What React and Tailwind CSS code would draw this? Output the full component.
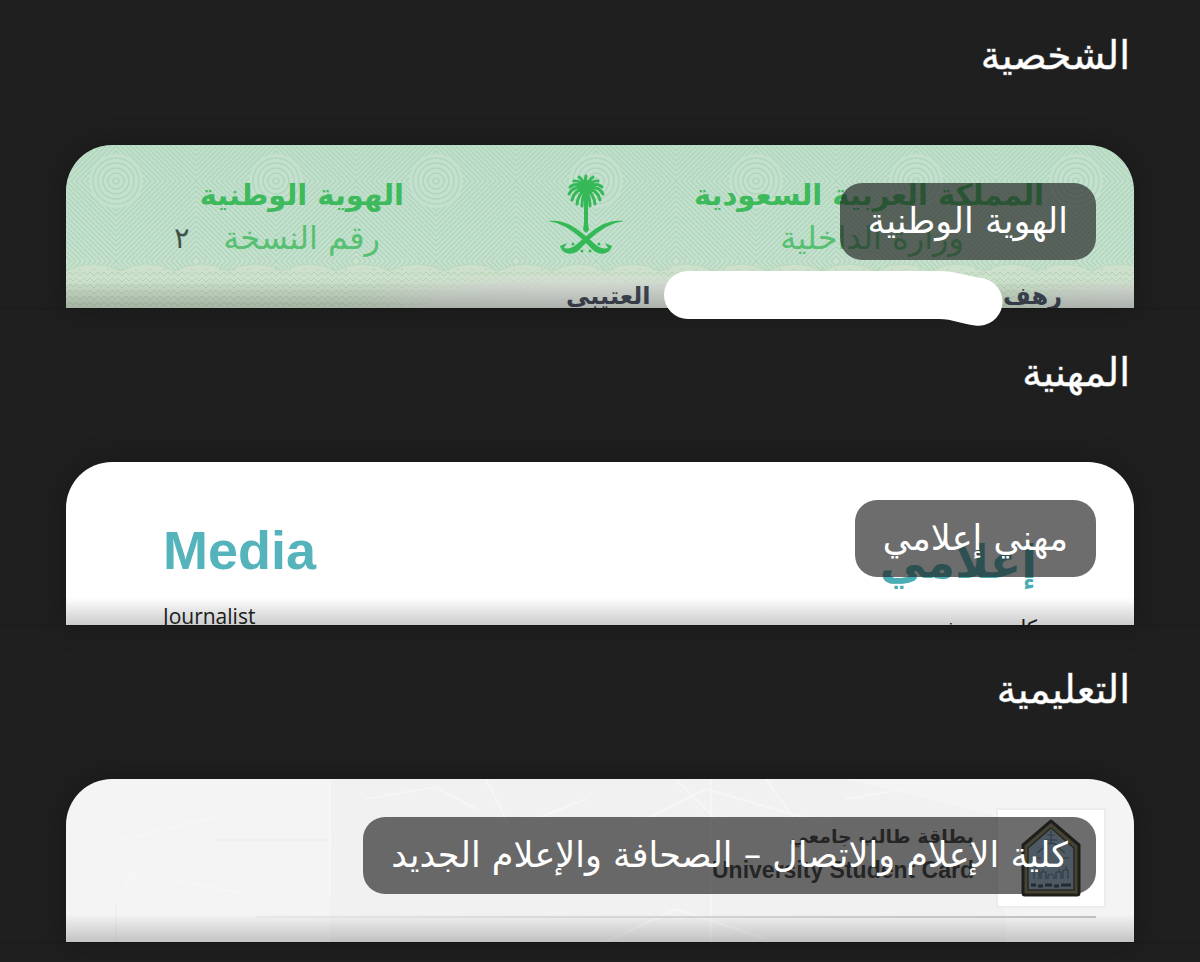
import clsx from "clsx";

function Palm({ className }) {
    return (
        <svg viewBox="0 0 76 84" className={className} fill="#35b957">
            <g fill="none" stroke="#35b957" strokeWidth="3" strokeLinecap="round">
                <path d="M38 14Q37 6 38 3M38 14Q34 6 31 4M38 14Q42 6 45 4" />
                <path d="M38 14Q31 7 26 8M38 14Q45 7 50 8" />
                <path d="M38 14Q27 9 22 14M38 14Q49 9 54 14" />
                <path d="M38 14Q24 13 21 21M38 14Q52 13 55 21" />
                <path d="M38 15Q26 17 24 27M38 15Q50 17 52 27" />
                <path d="M38 16Q30 21 29 31M38 16Q46 21 47 31" />
                <path d="M38 17Q34 24 34 33M38 17Q42 24 42 33" />
            </g>
            <ellipse cx="38" cy="14" rx="9" ry="7" />
            <path d="M36 18H40L40 50L41 57L38 60L35 57L36 50Z" />
            <path d="M0 48C18 46 28 55 39 64C47 71 52 77 60 75L57 70L64 73C62 81 53 83 46 78C37 70 24 52 0 48Z" />
            <path d="M76 48C58 46 48 55 37 64C29 71 24 77 16 75L19 70L12 73C14 81 23 83 30 78C39 70 52 52 76 48Z" />
            <circle cx="25" cy="71" r="1.5" />
            <circle cx="34" cy="78" r="1.5" />
            <circle cx="42" cy="78" r="1.5" />
            <circle cx="51" cy="71" r="1.5" />
        </svg>
    );
}

function Guilloche() {
    const rings = [5, 10, 15, 20, 25, 30, 35, 40, 45, 50, 55, 60, 65, 70, 75, 80];
    return (
        <svg className="absolute inset-0 size-full" aria-hidden="true">
            <defs>
                <linearGradient id="paper" x1="0" y1="0" x2="0" y2="1">
                    <stop offset="0" stopColor="#c2dfcc" />
                    <stop offset="0.6" stopColor="#c7e1d0" />
                    <stop offset="1" stopColor="#cfe0cd" />
                </linearGradient>
                <pattern
                    id="rings"
                    width="160"
                    height="160"
                    x="130"
                    y="-44"
                    patternUnits="userSpaceOnUse"
                >
                    <g fill="none" stroke="#9ccfae" strokeWidth="1.5">
                        {rings.map((r) => (
                            <path
                                key={r}
                                d={`M${80 - r} 80L80 ${80 - r}L${80 + r} 80L80 ${80 + r}Z`}
                                strokeLinejoin="round"
                            />
                        ))}
                        {rings.map((r) => (
                            <path
                                key={r}
                                d={`M0 ${80 - r}L${80 - r} 0M160 ${80 - r}L${80 + r} 0M0 ${80 + r}L${80 - r} 160M160 ${80 + r}L${80 + r} 160`}
                            />
                        ))}
                    </g>
                    <circle cx="80" cy="80" r="27" fill="#c6e0cf" />
                    <g fill="none" stroke="#9ccfae" strokeWidth="1.5">
                        <circle cx="80" cy="80" r="3" />
                        <circle cx="80" cy="80" r="8" />
                        <circle cx="80" cy="80" r="13" />
                        <circle cx="80" cy="80" r="18" />
                        <circle cx="80" cy="80" r="23" />
                    </g>
                </pattern>
                <pattern id="zigzag" width="14" height="6" patternUnits="userSpaceOnUse">
                    <path d="M0 5L4 1L7 4L10 1L14 5" fill="none" stroke="#b4d1b4" strokeWidth="1" />
                </pattern>
                <pattern id="scallop" width="54" height="60" y="118" patternUnits="userSpaceOnUse">
                    <path d="M0 8Q27 -6 54 8V60H0Z" fill="#cde0cb" />
                    <path d="M0 8Q27 -6 54 8" fill="none" stroke="#b7d9bc" />
                </pattern>
                <radialGradient id="glow">
                    <stop offset="0" stopColor="#dadeda" />
                    <stop offset="0.6" stopColor="#d6ddd5" stopOpacity="0.9" />
                    <stop offset="1" stopColor="#d6ddd5" stopOpacity="0" />
                </radialGradient>
            </defs>
            <rect width="100%" height="100%" fill="url(#paper)" />
            <rect width="100%" height="100%" fill="url(#rings)" opacity="0.55" />
            <rect y="118" width="100%" height="60" fill="url(#scallop)" />
            <rect y="124" width="100%" height="50" fill="url(#zigzag)" />
            <ellipse cx="48%" cy="158" rx="22%" ry="32" fill="url(#glow)" />
            <ellipse cx="99%" cy="165" rx="12%" ry="32" fill="url(#glow)" />
        </svg>
    );
}

function NationalIdArt() {
    return (
        <div className="relative h-full">
            <Guilloche />
            <div
                dir="ltr"
                className="relative flex pt-7 pr-[90px] pl-[108px] text-[#3eb95c]"
            >
                <div dir="rtl" className="w-[230px]">
                    <p className="text-[29px] leading-[44px] font-bold whitespace-nowrap">
                        الهوية الوطنية
                    </p>
                    <p className="flex items-center justify-between pr-6 text-[32px] leading-[42px] whitespace-nowrap opacity-80">
                        رقم النسخة
                        <span className="text-[29px] text-[#222f2a]">٢</span>
                    </p>
                </div>
                <Palm className="mr-[70px] ml-auto h-[84px] w-[76px]" />
                <div dir="rtl" className="w-[350px]">
                    <p className="text-[29px] leading-[44px] font-bold whitespace-nowrap">
                        المملكة العربية السعودية
                    </p>
                    <p className="pr-20 text-[32px] leading-[42px] whitespace-nowrap opacity-80">
                        وزارة الداخلية
                    </p>
                </div>
            </div>
            <div className="relative mt-5 flex justify-between pr-[72px] pl-[484px] text-[24px] leading-[34px] font-bold text-[#3f4654]">
                <span>رهف</span>
                <span className="pl-4">العتيبي</span>
            </div>
        </div>
    );
}

function MediaArt() {
    return (
        <div className="h-full bg-white px-[97px] pt-[54px]">
            <div dir="ltr" className="flex justify-between">
                <div>
                    <p className="font-['Liberation_Sans'] text-[54px] leading-[68px] font-bold text-[#55b4bb]">
                        Media
                    </p>
                    <p className="mt-4 font-['Open_Sans'] text-[21px] leading-8 text-[#222]">
                        Journalist
                    </p>
                </div>
                <div dir="rtl">
                    <p className="text-[46px] leading-[92px] font-bold text-[#48adb4]">إعلامي</p>
                    <p className="mt-1 text-[21px] leading-8 text-[#222]">كاتب صحفي</p>
                </div>
            </div>
        </div>
    );
}

function UniversityCrest({ className }) {
    return (
        <svg viewBox="0 0 60 78" className={className}>
            <path
                d="M30 2L58 26V74Q58 76 56 76H4Q2 76 2 74V26Z"
                fill="#8f8c5c"
                stroke="#211d17"
                strokeWidth="3"
                strokeLinejoin="round"
            />
            <path
                d="M30 9L53 29V71H7V29Z"
                fill="#a3c8e2"
                stroke="#3a3a2c"
                strokeWidth="1.5"
            />
            <g fill="none" stroke="#53748f" strokeWidth="1.2">
                <path d="M30 12V25M26 16H34M24 21H36M22 28Q30 20 38 28" />
                <path d="M16 34L22 29M44 34L38 29M12 39H20M40 39H48" />
                <path d="M13 60V51H18V60M20 60V53H25V60M27 60V57Q30 53 33 57V60M35 60V53H40V60M42 60V51H47V60" />
                <path d="M15 51V47M45 51V47M22 53V50M38 53V50" />
            </g>
            <path
                d="M10 66H15M17 67H22M24 66H31M33 67H38M40 66H50"
                stroke="#2c4252"
                strokeWidth="3"
            />
        </svg>
    );
}

function StudentArt() {
    return (
        <div className="relative h-full bg-[#f4f4f4]">
            <svg
                viewBox="0 0 1068 163"
                preserveAspectRatio="none"
                className="absolute inset-0 size-full"
                fill="none"
                aria-hidden="true"
            >
                <path d="M264 0H780L940 40V163H264Z" fill="#f1f1f1" />
                <g stroke="#f6f6f6" strokeWidth="2">
                    <path d="M264 0V120M420 0L445 50L520 20M560 50L640 10L760 45M645 0V163M610 0L660 50" />
                    <path d="M300 20L370 8L410 30M700 0L735 50M780 20L840 10M540 163L610 130L700 160" />
                    <path d="M50 62L150 38M55 115L65 95L80 116M100 100L180 115" />
                </g>
                <path d="M150 61H264M50 125V163" stroke="#f0f0f0" strokeWidth="2" />
            </svg>
            <div className="relative flex items-start gap-[22px] pt-[29px] pr-7">
                <div className="flex h-[100px] w-[110px] items-center justify-center border-2 border-[#ececec] bg-white">
                    <UniversityCrest className="h-[78px] w-[60px]" />
                </div>
                <div className="pt-3 font-bold text-[#333]">
                    <p className="text-[19px] leading-8">بطاقة طالب جامعي</p>
                    <p dir="ltr" className="font-['Liberation_Sans'] text-[23px] leading-9">
                        University Student Card
                    </p>
                </div>
            </div>
            <div className="relative mt-2 mr-[38px] ml-[190px] h-[2px] bg-linear-to-l from-[#c4c4c4] to-[#ececec]" />
        </div>
    );
}

function Redaction() {
    return (
        <svg
            viewBox="0 0 340 57"
            className="absolute top-[125px] right-[131px] z-20 h-[57px] w-[340px]"
            aria-hidden="true"
        >
            <path
                d="M25 1H276C293 1 303 6 319 8A24 24 0 0 1 312 55.5C298 54 290 49 276 49H25A24 24 0 0 1 25 1Z"
                fill="#fff"
            />
        </svg>
    );
}

const sections = [
    { title: "الشخصية", label: "الهوية الوطنية", Art: NationalIdArt, covered: true },
    { title: "المهنية", label: "مهني إعلامي", Art: MediaArt },
    {
        title: "التعليمية",
        label: "كلية الإعلام والاتصال – الصحافة والإعلام الجديد",
        Art: StudentArt,
    },
];

function Section({ title, label, Art, covered, first }) {
    return (
        <section className="border-b border-[#1a1a1a]">
            <h2
                className={clsx(
                    "px-[70px] pb-[61px] text-[39px] leading-[56px] font-medium text-white [-webkit-text-stroke:1px_#ffffff66]",
                    first ? "pt-7" : "pt-9"
                )}
            >
                {title}
            </h2>
            <div className="relative mx-[66px]">
                <article className="relative h-[163px] overflow-hidden rounded-t-[46px] shadow-[0_0_28px_rgba(0,0,0,0.25)]">
                    <Art />
                    <div className="absolute inset-x-0 bottom-0 h-7 bg-linear-to-t from-black/20 to-transparent" />
                    <h3 className="absolute top-[38px] right-[38px] rounded-[22px] bg-[#1f1f1f]/65 px-7 text-[35px] leading-[77px] whitespace-nowrap text-white">
                        {label}
                    </h3>
                </article>
                {covered && <Redaction />}
            </div>
        </section>
    );
}

export default function App() {
    return (
        <main
            dir="rtl"
            className="min-h-screen overflow-hidden bg-[#1f1f1f] font-['DejaVu_Sans',sans-serif]"
        >
            {sections.map((section, idx) => (
                <Section key={section.title} {...section} first={idx === 0} />
            ))}
        </main>
    );
}
